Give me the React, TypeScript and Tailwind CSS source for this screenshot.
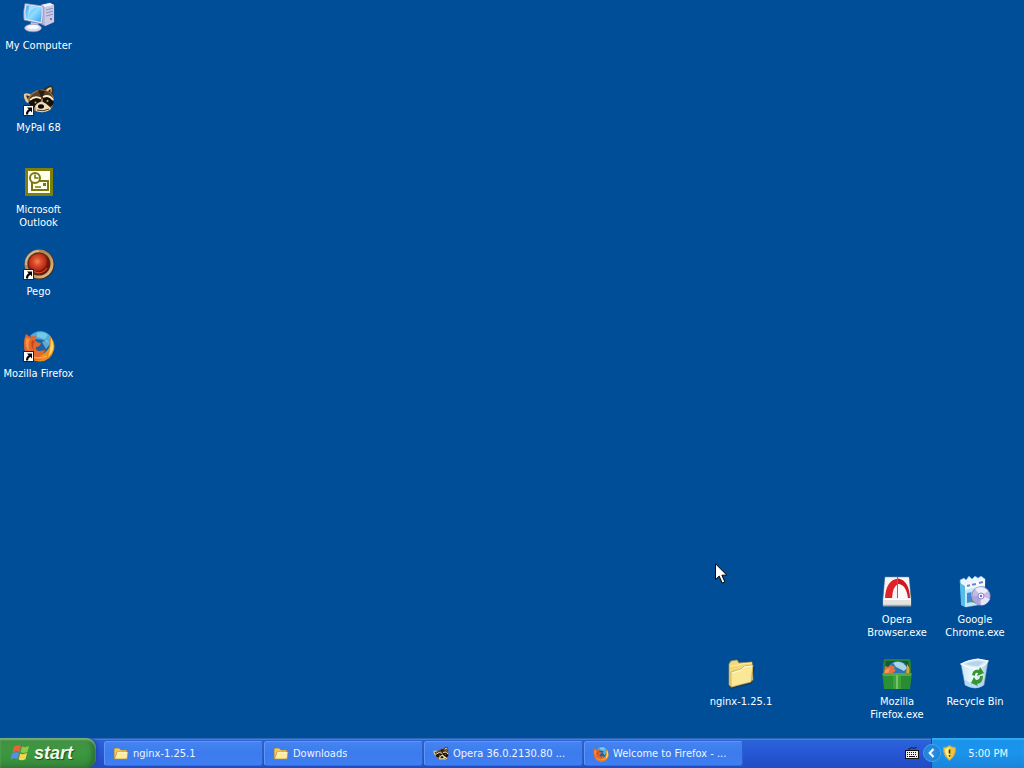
import type { ReactNode } from "react";

function Shortcut() {
  return (
    <g>
      <rect x="0.5" y="21.5" width="10" height="10" fill="#fff" stroke="#222" />
      <path d="M4 23.5h5v5L7.3 26.8Q5 28.2 5 30.4H3Q2.8 27 5.7 25.2z" fill="#000" />
    </g>
  );
}

function ComputerIcon() {
  return (
    <svg viewBox="0 0 32 32" className="size-8" aria-hidden="true">
      <defs>
        <linearGradient id="pcScreen" x1="0" y1="0" x2="1" y2="1">
          <stop offset="0" stopColor="#4aa6f0" />
          <stop offset="0.5" stopColor="#8fdcff" />
          <stop offset="1" stopColor="#3d9cf0" />
        </linearGradient>
      </defs>
      <path d="M18 3l9-2 4 2v17l-9 4-4-2z" fill="#b9b9dc" stroke="#70709f" strokeWidth="0.6" />
      <path d="M18 3l9-2 4 2-9 2z" fill="#f4f4ff" />
      <path d="M22 5l9-2v17l-9 4z" fill="#c9c9e8" />
      <path d="M23 8l7-1.8M23 11l7-1.8M23 14l7-1.8" stroke="#8f8fba" strokeWidth="1" />
      <circle cx="28" cy="17" r="1" fill="#60609a" />
      <path d="M8 20l7 1 1 4-9-1z" fill="#c5c5e2" />
      <ellipse cx="10" cy="26" rx="8.5" ry="3.8" fill="#d9d9ef" stroke="#8b8bb5" strokeWidth="0.6" />
      <ellipse cx="10" cy="25" rx="6" ry="2" fill="#fafaff" />
      <path d="M2 1.5L20 4Q21 12 19 22L1 18Q0 9 2 1.5z" fill="#e2e5f7" stroke="#7f83ad" strokeWidth="0.7" />
      <path d="M3.5 3.2L18.6 5.2Q19 13 17.7 20L2.7 16.8Q1.8 9 3.5 3.2z" fill="url(#pcScreen)" />
      <path d="M5 14Q8 6 15 5L6 4z" fill="#cbf0ff" opacity="0.6" />
    </svg>
  );
}

function Raccoon() {
  return (
    <g>
      <path d="M19 7Q24 1 29 1.5Q32 7 29 15L21 13z" fill="#3b2c1f" />
      <path d="M22 7Q25 3 28.4 3.2Q29.5 7 27.5 11z" fill="#e8d09d" />
      <path d="M24 8l3.5-3 .2 5z" fill="#20160e" />
      <path d="M1 10Q4 8 9 11L8 17 4 19Q0 14 1 10z" fill="#e3c994" />
      <path d="M3 11.5Q6 11 8 13l-3 3z" fill="#38281c" />
      <path d="M5 14Q9 6 19 5.5Q28 6 30.5 13Q32 21 27 26Q20 30 12 27Q5 24 5 14z" fill="#9a7549" />
      <path d="M9 11Q15 5 23 7Q29 9 30 15Q25 11 20 15Q12 12 6 17Q6 14 9 11z" fill="#594129" />
      <path d="M15 6l4 9 3-8z" fill="#291d14" />
      <path d="M6 18Q11 12 18 15L17 22Q10 25 6 20z" fill="#160f0a" />
      <path d="M20 14Q27 11 31 18Q30 23 25 23L20 19z" fill="#160f0a" />
      <path d="M7 16Q12 11 18 14.5M20 13Q26 10 30 16" fill="none" stroke="#fff1ce" strokeWidth="1.7" />
      <path d="M12 22Q16 17 20 18Q26 21 28 25Q22 30 13 27z" fill="#efdcb3" />
      <ellipse cx="18" cy="22.5" rx="3" ry="2.2" fill="#090807" />
      <circle cx="12.5" cy="18.5" r="1" fill="#c8a764" />
      <circle cx="24.5" cy="17" r="1" fill="#c8a764" />
      <path d="M14 26Q20 28 26 25" fill="none" stroke="#4b3422" />
    </g>
  );
}

function MyPalIcon() {
  return (
    <svg viewBox="0 0 32 32" className="size-8" aria-hidden="true">
      <Raccoon />
      <Shortcut />
    </svg>
  );
}

function OutlookIcon() {
  return (
    <svg viewBox="0 0 32 32" className="size-8" aria-hidden="true">
      <path d="M2 2h28v28H2z" fill="#7e7f0c" />
      <path d="M5 5h22v22H5z" fill="#fffff0" />
      <path d="M9 15h16v9H9z" fill="#fffff0" stroke="#77780d" strokeWidth="2" />
      <circle cx="12" cy="12" r="5" fill="#fffff0" stroke="#77780d" strokeWidth="2" />
      <path d="M12 8.5V12h3.5" fill="none" stroke="#77780d" strokeWidth="1.6" />
      <path d="M20 17h3v3h-3z" fill="#77780d" />
      <path d="M12 21h6" stroke="#77780d" strokeWidth="1.5" />
    </svg>
  );
}

function PegoIcon() {
  return (
    <svg viewBox="0 0 32 32" className="size-8" aria-hidden="true">
      <defs>
        <linearGradient id="pegoRim" x1="0" y1="0" x2="1" y2="1">
          <stop offset="0" stopColor="#a18058" />
          <stop offset="0.5" stopColor="#b98d58" />
          <stop offset="1" stopColor="#edc891" />
        </linearGradient>
        <radialGradient id="pegoBall" cx="42%" cy="38%">
          <stop offset="0" stopColor="#f4825d" />
          <stop offset="0.4" stopColor="#db4b29" />
          <stop offset="0.8" stopColor="#b62d17" />
          <stop offset="1" stopColor="#711509" />
        </radialGradient>
      </defs>
      <circle cx="16.5" cy="16.5" r="15" fill="#3e281b" />
      <circle cx="16" cy="16" r="14.5" fill="url(#pegoRim)" />
      <path d="M3 17A13 13 0 0 1 16 3" fill="none" stroke="#d9bf92" strokeWidth="1.5" />
      <circle cx="16" cy="16" r="11.5" fill="#582818" />
      <circle cx="16" cy="16" r="10.5" fill="url(#pegoBall)" />
      <path d="M10 23Q18 28 24 20" fill="none" stroke="#d44b27" strokeWidth="1.2" />
      <Shortcut />
    </svg>
  );
}

function Fox() {
  return (
    <g>
      <circle cx="17" cy="14.5" r="13.5" fill="#1c63a5" />
      <path d="M7 6Q14-1 23 2.5Q31 7 29.5 17Q24 9 13 9Q9 7 7 6z" fill="#4eacdc" />
      <path d="M14 3q7-2 11 2l-3 4-8-2zM19 12l5-2 3 4-4 5z" fill="#91d9ed" opacity="0.6" />
      <path d="M26 5Q33 12 31 20Q28 31 17 31.5Q8 31 4 25Q10 28 17 25Q27 22 27 12z" fill="#f18b1d" />
      <path d="M28 8Q34 19 25 27Q28 19 28 8z" fill="#ffdc5b" />
      <path d="M3 4L7 7Q11 5 14 7L12 10Q14 13 18 13Q17 17 13 17Q12 21 17 21L22 20Q21 25 16 26Q20 28 26 25Q19 32 10 29Q0 25 1 13Q1 9 3 4z" fill="#e5672b" />
      <path d="M3 8Q1 17 7 22Q4 15 7 9z" fill="#f7943b" />
      <path d="M9 10Q7 16 11 21Q9 15 12 11z" fill="#be4a20" />
      <path d="M6 24Q14 31 24 26" fill="none" stroke="#ffad32" strokeWidth="1.5" />
    </g>
  );
}

function FirefoxIcon() {
  return (
    <svg viewBox="0 0 32 32" className="size-8" aria-hidden="true">
      <Fox />
      <Shortcut />
    </svg>
  );
}

function OperaIcon() {
  return (
    <svg viewBox="0 0 32 32" className="size-8" aria-hidden="true">
      <path d="M4 1h24l2 22v7H2v-7z" fill="#d8d8da" stroke="#777f88" strokeWidth="0.6" />
      <path d="M4.3 1.5h23.4l1.8 21.5h-27z" fill="#f5f5f5" />
      <path d="M4 22Q5 4 17 2.5V8Q12 10 11 22z" fill="#e0222a" />
      <path d="M17 2.5Q28 4 29 22h-2Q25 8 17 8z" fill="#cb1a22" />
      <path d="M17 8q7 1 9 14H17z" fill="#fffaf8" />
      <path d="M16.5 1v21" stroke="#777" />
      <path d="M2 23h28v7H2z" fill="#e4e3df" />
      <path d="M2.5 23.5h27" stroke="#fff" />
      <path d="M2 29.5h28" stroke="#aaa9a4" strokeWidth="1.5" />
    </svg>
  );
}

function InstallerIcon() {
  return (
    <svg viewBox="0 0 32 32" className="size-8" aria-hidden="true">
      <path d="M1 4l4-2 2 2 3-4 3 3 3-3 3 2 3-2 4 3-1 25-18 3-4-2z" fill="#e7f6ff" stroke="#6ea7d0" strokeWidth="0.6" />
      <path d="M1 7l5 3v21l-4-2z" fill="#55bde8" />
      <path d="M6 8l20-5v23L6 31z" fill="#c4e5fa" />
      <path d="M6 8l20-5v6L6 14z" fill="#fafcff" />
      <path d="M8 10l3-.7M13 8.8l4-.9M20 7l4-1" stroke="#6284d7" strokeWidth="2" />
      <path d="M8 17l5-1v10l-5 1z" fill="#4088d1" />
      <path d="M13 16l5 2-2 9-4-1z" fill="#48a52d" />
      <path d="M12 16l5-1-2 5-3 1z" fill="#f1c42f" />
      <circle cx="22" cy="20" r="9.3" fill="#c1bce7" stroke="#7370a4" strokeWidth="0.7" />
      <path d="M22 20L16 13Q23 8 29 15z" fill="#efecff" />
      <path d="M22 20l-2 9q-7-3-7-9z" fill="#aaa4df" />
      <path d="M22 20l9 3q-4 7-9 6z" fill="#e8e5fb" />
      <circle cx="22" cy="20" r="3" fill="#faf9ff" stroke="#8b84c3" />
      <circle cx="22" cy="20" r="1.2" fill="#796eb8" />
    </svg>
  );
}

function FirefoxPackageIcon() {
  return (
    <svg viewBox="0 0 32 32" className="size-8" aria-hidden="true">
      <path d="M3 1h26l1 5v10H2V6z" fill="#258234" />
      <path d="M5 3h22l2 13H3z" fill="#1a583b" />
      <path d="M6 17Q6 4 16 3Q27 3 28 17z" fill="#2b75b3" />
      <path d="M12 5q9-4 14 5l-3 3-8-4z" fill="#a7d7e9" />
      <path d="M4 8l3 1 3-2 4 2-1 2 2 1-4 4H3z" fill="#e9703d" />
      <path d="M4 12l5-2-2 6H3z" fill="#fa9563" />
      <path d="M26 6q4 5 2 10h-3z" fill="#e2a132" />
      <path d="M1 15h30l-2 16H3z" fill="#298c32" />
      <path d="M2 15h28v3H2z" fill="#54aa48" />
      <path d="M12 18h8v13h-8z" fill="#40a03d" />
      <path d="M3 18h9l-1 13H4z" fill="#2b9137" />
      <path d="M15 17h2v14h-2z" fill="#76c560" />
    </svg>
  );
}

function RecycleIcon() {
  return (
    <svg viewBox="0 0 32 32" className="size-8" aria-hidden="true">
      <defs>
        <linearGradient id="bin" x1="0" x2="1">
          <stop offset="0" stopColor="#c8e8f6" />
          <stop offset="0.5" stopColor="#f1faff" />
          <stop offset="1" stopColor="#a9cce5" />
        </linearGradient>
      </defs>
      <path d="M2 6L19 1l10 2-4 24Q17 33 6 27z" fill="url(#bin)" stroke="#7399bd" strokeWidth="0.6" />
      <path d="M2 6Q9 2 19 1L29 3Q26 8 19 10Q9 10 2 6z" fill="#d7eafa" stroke="#f9fdff" strokeWidth="1.2" />
      <path d="M6 6q7-3 13-3l6 1-6 4q-7 0-13-2z" fill="#b7d3ec" />
      <path d="M6 22Q14 28 25 22L24 28Q14 33 6 27z" fill="#a9d5f5" opacity="0.8" />
      <path d="M13 17Q14 11 20 12L21 9l4 6-7 3 1-3q-3-1-3 3zM24 18q0 7-6 8l1 2-7-3 3-6 2 3q4 0 4-4z" fill="#379632" />
    </svg>
  );
}

function FolderIcon({ small = false }: { small?: boolean }) {
  return small ? (
    <svg viewBox="0 0 16 16" className="size-4 shrink-0" aria-hidden="true">
      <path d="M1 3l1-1h4l2 2h6v9H2L1 12z" fill="#edc95f" stroke="#8f7940" strokeWidth="0.7" />
      <path d="M4 6h11l-1 7H1.5z" fill="#ffeb9b" stroke="#a99148" strokeWidth="0.7" />
      <path d="M4.5 6.7h9.7" stroke="#fffbd5" />
    </svg>
  ) : (
    <svg viewBox="0 0 32 32" className="size-8" aria-hidden="true">
      <path d="M6 30l20-5 3-16" fill="none" stroke="#17324d" strokeWidth="2" opacity="0.6" />
      <path d="M4 6l2-3 6-1 2 3 13-1 1 18L7 29l-3-2z" fill="#f2d879" stroke="#ad9651" strokeWidth="0.7" />
      <path d="M5 8l9-1 2-1 11-1" fill="none" stroke="#fff0a6" />
      <path d="M6 14l10-3 3-3 9-1-2 17-20 5z" fill="#fae896" stroke="#bba75f" strokeWidth="0.7" />
      <path d="M7 15l9-3 3-3 8-1" fill="none" stroke="#fffbd1" />
    </svg>
  );
}

function WindowsFlag() {
  return (
    <svg viewBox="0 0 20 20" className="size-5 shrink-0" aria-hidden="true">
      <path d="M4 4Q7 1 11 3L9.5 9Q6 7.5 2.3 9.5z" fill="#e96337" />
      <path d="M12 3.5Q15 5 19 3L17.4 9Q14 11 10.5 9.3z" fill="#8acb4c" />
      <path d="M2 10.5Q6 8.5 9.2 10L7.6 16Q4 14.5.5 16.5z" fill="#588eea" />
      <path d="M10.2 10.5Q13 12 17.1 10L15.5 16.2Q12 18 8.6 16.5z" fill="#f7d54d" />
    </svg>
  );
}

function DesktopItem({ label, icon, place = "" }: { label: string; icon: ReactNode; place?: string }) {
  return (
    <button type="button" className={`flex h-[82px] flex-col items-center gap-[5px] pt-0.5 text-[11px] leading-[13px] text-white ${place}`}>
      {icon}
      <span className="whitespace-pre-line text-center">{label}</span>
    </button>
  );
}

function TaskButton({ label, icon }: { label: string; icon: ReactNode }) {
  return (
    <button
      type="button"
      className="flex h-[25px] min-w-0 max-w-[159px] flex-1 items-center gap-1 rounded-[3px] border border-t-[#5f97f6] border-r-[#2c5fce] border-b-[#326cdf] border-l-[#5f97f6] bg-linear-to-b from-[#4583f0] via-[#3c7bee] to-[#3f7ff2] px-2 text-left text-[11px] leading-[13px] text-[#eef5ff]"
    >
      {icon}
      <span className="truncate">{label}</span>
    </button>
  );
}

export default function App() {
  return (
    <div className="flex min-h-screen flex-col bg-[#004e98] font-['DejaVu_Sans_Condensed','DejaVu_Sans',sans-serif] select-none">
      <main className="relative flex flex-1 items-start justify-between">
        <section aria-label="Desktop shortcuts" className="flex w-[77px] flex-col">
          <DesktopItem label="My Computer" icon={<ComputerIcon />} />
          <DesktopItem label="MyPal 68" icon={<MyPalIcon />} />
          <DesktopItem label={"Microsoft\nOutlook"} icon={<OutlookIcon />} />
          <DesktopItem label="Pego" icon={<PegoIcon />} />
          <DesktopItem label="Mozilla Firefox" icon={<FirefoxIcon />} />
        </section>
        <section aria-label="Files" className="mr-[10px] grid grid-cols-[repeat(4,78px)] self-end">
          <DesktopItem place="col-start-3" label={"Opera\nBrowser.exe"} icon={<OperaIcon />} />
          <DesktopItem place="col-start-4" label={"Google\nChrome.exe"} icon={<InstallerIcon />} />
          <DesktopItem place="col-start-1" label="nginx-1.25.1" icon={<FolderIcon />} />
          <DesktopItem place="col-start-3" label={"Mozilla\nFirefox.exe"} icon={<FirefoxPackageIcon />} />
          <DesktopItem place="col-start-4" label="Recycle Bin" icon={<RecycleIcon />} />
        </section>
        <svg viewBox="0 0 12 21" className="pointer-events-none absolute top-[563px] left-[715px] h-[21px] w-3" aria-hidden="true">
          <path d="M.5.8v15.8l3.7-3.5 3 7 2.7-1.2-3-6.7h5z" fill="#fff" stroke="#000" />
        </svg>
      </main>

      <footer className="flex h-[30px] items-stretch bg-linear-to-b from-[#2b66d9] via-[#2859d8] via-40% to-[#214cc3] shadow-[inset_0_1px_0_#2f65b5,inset_0_2px_0_#3f7fe8]">
        <button
          type="button"
          className="flex w-24 shrink-0 items-center gap-1 rounded-r-[10px] bg-linear-to-b from-[#439044] via-[#3c983f] to-[#37893a] pl-2.5 font-['Liberation_Sans',Arial,sans-serif] text-[18px] leading-5 font-bold text-[#f3faee] italic shadow-[inset_0_2px_2px_#76b37a,inset_-4px_-1px_5px_#2a6f37,2px_0_3px_#204aae] [text-shadow:1px_1px_1px_#1d4b1d]"
        >
          <WindowsFlag />
          <span>start</span>
        </button>
        <nav aria-label="Open windows" className="flex min-w-0 flex-1 items-center gap-px pt-px pl-2">
          <TaskButton label="nginx-1.25.1" icon={<FolderIcon small />} />
          <TaskButton label="Downloads" icon={<FolderIcon small />} />
          <TaskButton
            label="Opera 36.0.2130.80 ..."
            icon={
              <svg viewBox="0 0 32 32" className="size-4 shrink-0" aria-hidden="true">
                <Raccoon />
              </svg>
            }
          />
          <TaskButton
            label="Welcome to Firefox - ..."
            icon={
              <svg viewBox="0 0 32 32" className="size-4 shrink-0" aria-hidden="true">
                <Fox />
              </svg>
            }
          />
        </nav>
        <button type="button" aria-label="On-screen keyboard" className="flex w-8 shrink-0 items-center pl-[6px]">
          <svg viewBox="0 0 14 14" className="size-3.5" aria-hidden="true">
            <path d="M4 4V2.5h2v-1h2v1h2v-1h2" fill="none" stroke="#111" strokeDasharray="2 1" />
            <rect x="0.5" y="4.5" width="13" height="8" fill="#eee" stroke="#111" />
            <path d="M2 6.5h10M2 8.5h10" stroke="#111" strokeDasharray="1 1" />
            <path d="M2 10.5h1M4 10.5h6M11 10.5h1" stroke="#111" />
          </svg>
        </button>
        <aside className="relative flex w-[93px] shrink-0 items-center justify-between border-l border-[#194a9b] bg-linear-to-b from-[#1c91ea] via-[#1b94ec] to-[#1984da] pr-4 pl-2.5 text-[11px] leading-[13px] text-[#eef8ff] shadow-[inset_0_2px_1px_#2eacf2]">
          <button
            type="button"
            aria-label="Show hidden icons"
            className="absolute top-[6px] -left-[9px] flex size-[18px] items-center justify-center rounded-full border border-[#4ba4e8] bg-radial from-[#2995e5] to-[#2076cf]"
          >
            <svg viewBox="0 0 10 10" className="size-2.5" aria-hidden="true">
              <path d="M6.5 1L2.7 5l3.8 4" fill="none" stroke="#fff" strokeWidth="2" />
            </svg>
          </button>
          <svg viewBox="0 0 16 16" className="size-4" aria-hidden="true">
            <path d="M7.5 .5Q10.5 2.5 13.5 2.5Q14 11 7.5 15.5Q1 11 1.5 2.5Q4.5 2.5 7.5 .5z" fill="#f2c532" stroke="#a5a08a" />
            <path d="M7.5 2Q5 4 3 4Q3 10 7.5 13.5z" fill="#fff08a" />
            <path d="M7.5 4.5v4" stroke="#3a2c06" strokeWidth="1.6" />
            <circle cx="7.5" cy="10.8" r="0.9" fill="#3a2c06" />
          </svg>
          <time>5:00 PM</time>
        </aside>
      </footer>
    </div>
  );
}
